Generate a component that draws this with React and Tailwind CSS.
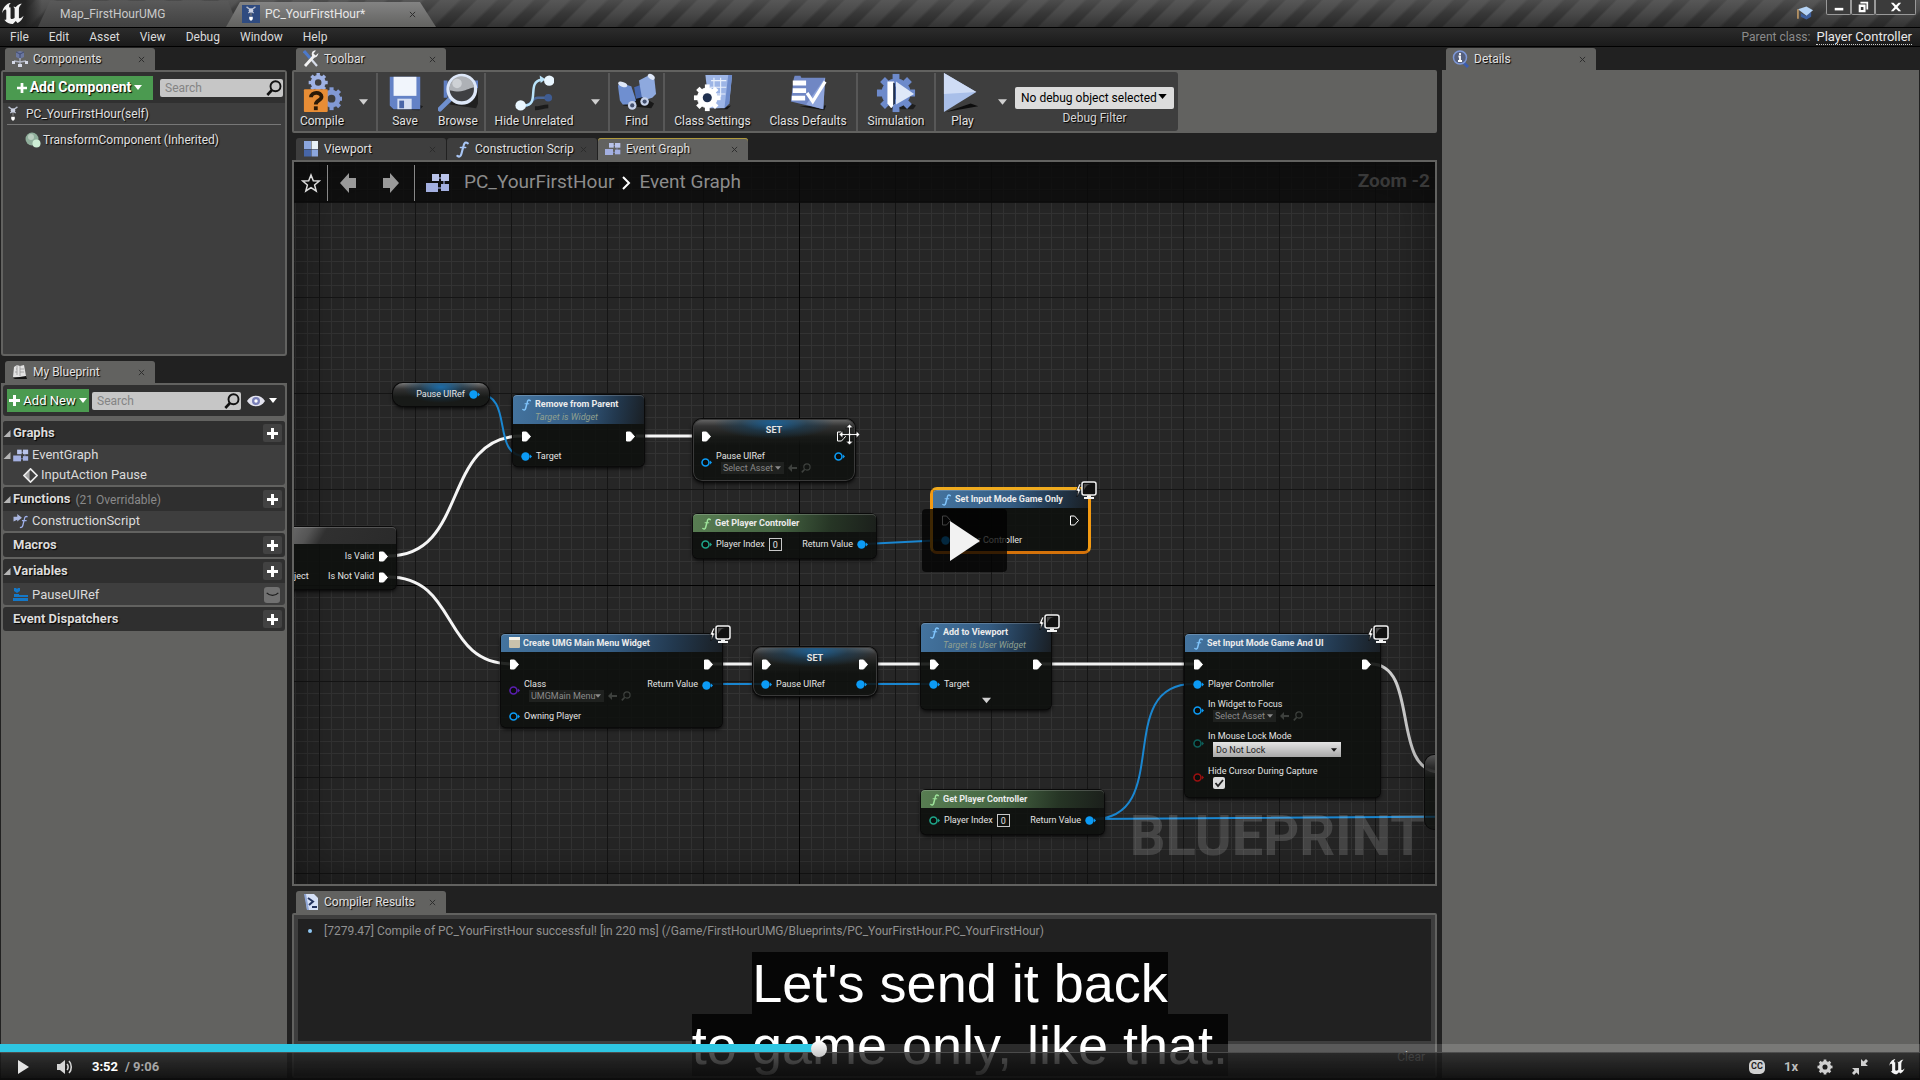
import React, { useState } from 'react';

const U_PATH =
  'M19.13 13.729c-.206.997-1.126 3.557-4.06 4.942l-1.179-1.325-1.988 2a7.338 7.338 0 01-5.804-2.978 2.859 2.859 0 00.65.123c.326.006.678-.114.678-.66v-5.394a.89.89 0 00-1.116-.89c-.92.212-1.656 2.509-1.656 2.509a7.304 7.304 0 012.528-5.597 7.408 7.408 0 013.73-1.721c-1.006.573-1.57 1.507-1.57 2.29 0 1.262.76 1.109.984.923v7.28a1.157 1.157 0 00.148.256 1.075 1.075 0 00.88.445c.76 0 1.747-.868 1.747-.868V9.172c0-.6-.452-1.324-.905-1.572 0 0 .838-.149 1.484.346a5.537 5.537 0 01.387-.425c1.508-1.48 2.929-1.902 4.112-2.112 0 0-2.151 1.69-2.151 3.96 0 1.687.043 5.801.043 5.801.799.771 1.986-.342 3.059-1.441z';

const SHADOW = '[text-shadow:1px_1px_1px_#000]';

/* ---------- icons ---------- */

function UnrealLogo({ className }) {
  return (
    <svg viewBox="4.5 5 15 15" className={className}>
      <path d={U_PATH} fill="#f4f4f4" />
    </svg>
  );
}

function FuncIcon({ color = '#a9c6f5', className = 'h-[17px] w-[13px]' }) {
  return (
    <svg viewBox="0 0 12 16" className={className} fill="none" stroke={color} strokeLinecap="round">
      <path d="M11 2.2C9 .6 7.600 1.500 7 4.500L5 12C4.400 14.600 3 15.300 1.200 14" strokeWidth="2" />
      <path d="M4 6.200h5" strokeWidth="1.400" />
    </svg>
  );
}

function GraphIcon({ className = 'h-4 w-5' }) {
  return (
    <svg viewBox="0 0 24 20" className={className}>
      <path d="M10 5h6M18 8v4M10 15h6" stroke="#7d86b5" strokeWidth="1.500" />
      <rect x="6" y="1" width="7" height="7" fill="#b9c3ea" />
      <rect x="15" y="1" width="8" height="7" fill="#b9c3ea" />
      <rect x="0" y="10" width="12" height="9" fill="#a3afe0" />
      <rect x="15" y="11" width="8" height="7" fill="#a3afe0" />
    </svg>
  );
}

function PawnIcon({ className = 'h-4 w-3' }) {
  return (
    <svg viewBox="0 0 12 18" className={className}>
      <path d="M1 1l4 3M11 1L7 4M3 8l3-3 3 3" stroke="#b9bfce" strokeWidth="1.500" fill="none" />
      <circle cx="6" cy="5" r="2.600" fill="#ccd2e2" />
      <path d="M6 8v3" stroke="#777" strokeWidth="1.500" />
      <path d="M4 12h4v3l-2 2-2-2z" fill="#fff" />
    </svg>
  );
}

function ComponentsIcon() {
  return (
    <svg viewBox="0 0 16 18" className="h-[18px] w-4">
      <path d="M4 2l4-1 4 1v5l-4 2-4-2z" fill="#6b779f" />
      <path d="M4 2l4 2 4-2M8 4v5" stroke="#3f4a72" fill="none" />
      <path d="M8 8v6M2 11l6 1 6-1" stroke="#b0b5c2" strokeWidth="1.300" fill="none" />
      <path d="M0 11h3v3H0zM13 11h3v3h-3zM6 14h4v3H6z" fill="#d5d9e6" />
    </svg>
  );
}

function WrenchIcon() {
  return (
    <svg viewBox="0 0 16 18" className="h-[18px] w-4">
      <path d="M1 1l6 7" stroke="#4d79c9" strokeWidth="3" />
      <path d="M8 9l6 7" stroke="#d8deea" strokeWidth="2.200" />
      <path d="M2 16l9-10" stroke="#f2f2f2" strokeWidth="2.800" />
      <path d="M15.500 3l-3 2.500-2-2L13 .6C10 0 8 2.500 9 5.500s5.500 3 6.500-2.500z" fill="#f2f2f2" />
    </svg>
  );
}

function ViewportIcon() {
  return (
    <svg viewBox="0 0 16 16" className="h-4 w-4">
      <rect x="1" y="0" width="7" height="8" fill="#8ba6dd" />
      <rect x="8.500" y="0" width="6.500" height="8" fill="#e8f2f8" />
      <rect x="1" y="8.500" width="7" height="7" fill="#4766a8" />
      <rect x="8.500" y="8.500" width="6.500" height="7" fill="#8ba6dd" />
    </svg>
  );
}

function BookIcon() {
  return (
    <svg viewBox="0 0 16 16" className="h-4 w-4">
      <path d="M1 13l1-10 3-2 3 1 4-1 2 11-1 1z" fill="#e2e2e2" />
      <path d="M5 1v10M8 2v10M4 5h1M8 5h4M8 8h4M3 8h2" stroke="#9a9a9a" strokeWidth=".8" />
      <path d="M1 14l13-2 1 3H3z" fill="#111" />
    </svg>
  );
}

function DetailsIcon() {
  return (
    <svg viewBox="0 0 18 18" className="h-[18px] w-[18px]">
      <path d="M11 12l5 5" stroke="#3c5cae" strokeWidth="3" />
      <circle cx="8" cy="7.500" r="6.500" fill="#56607c" stroke="#7d97d6" strokeWidth="1.500" />
      <path d="M8 3v2M6.500 6.500H8V11M6 11h4" stroke="#fff" strokeWidth="1.800" fill="none" />
    </svg>
  );
}

function LogIcon() {
  return (
    <svg viewBox="0 0 16 18" className="h-[18px] w-4">
      <path d="M2 1h9l4 4v12H4z" fill="#d6e1f6" />
      <path d="M3 1l3 16H4L1 1z" fill="#8fa6d6" />
      <path d="M5 5l5 3.500L6 12M9 14h5" stroke="#24345e" strokeWidth="2" fill="none" />
    </svg>
  );
}

function SearchIcon({ className = 'h-4 w-4', color = '#111' }) {
  return (
    <svg viewBox="0 0 16 16" className={className} fill="none" stroke={color}>
      <circle cx="9.500" cy="6.300" r="5" strokeWidth="1.900" />
      <path d="M6 10L1.300 15" strokeWidth="2.600" />
    </svg>
  );
}

function Caret({ className = 'h-[6px] w-[9px]', color = '#d0d0d0' }) {
  return (
    <svg viewBox="0 0 10 6" className={className}>
      <path d="M0 0h10L5 6z" fill={color} />
    </svg>
  );
}

function Plus({ className = 'h-[11px] w-[11px]' }) {
  return (
    <svg viewBox="0 0 11 11" className={className}>
      <path d="M4 0h3v4h4v3H7v4H4V7H0V4h4z" fill="#fff" />
    </svg>
  );
}

function Cross() {
  return (
    <svg viewBox="0 0 8 8" className="h-[7px] w-[7px]">
      <path d="M1 1l6 6M7 1L1 7" stroke="#2c2c2c" strokeWidth="1.100" />
    </svg>
  );
}

function Gear({ cx, cy, r, fill, hole }) {
  return (
    <g fill={fill} stroke={fill}>
      <circle cx={cx} cy={cy} r={r * 0.74} />
      {[0, 45, 90, 135].map((a) => (
        <path key={a} d={`M${cx} ${cy - r}V${cy + r}`} strokeWidth={r * 0.36} transform={`rotate(${a} ${cx} ${cy})`} />
      ))}
      <circle cx={cx} cy={cy} r={r * 0.34} fill={hole} stroke="none" />
    </g>
  );
}

const TOOL_ICONS = {
  compile: (
    <>
      <Gear cx={17} cy={10} r={10} fill="#9fb2e4" hole="#3e3e3e" />
      <Gear cx={31} cy={27} r={12} fill="#8299d4" hole="#3e3e3e" />
      <rect x="2" y="17" width="25" height="24" rx="1" fill="#e88d35" />
      <path d="M9.500 25.500c0-6 11-6 11-.5 0 4-6 3.500-6 8" stroke="#2b1a08" strokeWidth="4" fill="none" />
      <rect x="12.500" y="35" width="4" height="4" fill="#2b1a08" />
    </>
  ),
  save: (
    <>
      <path d="M6 38l30 1 4-4-5-2z" fill="#1c1c1c" />
      <path d="M5 4h32v34H9l-4-4z" fill="#6482c6" />
      <path d="M9 4h24v20H9z" fill="#f1f5fc" />
      <path d="M13 27h15v11H13z" fill="#d5def2" />
      <path d="M15 29h5v8h-5z" fill="#4a66a8" />
    </>
  ),
  browse: (
    <>
      <path d="M12 33l28 4 2-5V10H30z" fill="#141414" opacity=".7" />
      <path d="M6 8h4v18H6zM34 8h8v8h-8z" fill="#5f7ec2" />
      <path d="M2 38l11-11" stroke="#6f90cf" strokeWidth="5" strokeLinecap="round" />
      <circle cx="25" cy="17" r="14.500" fill="#3f4043" stroke="#dde7f8" strokeWidth="3.500" />
      <path d="M12 18a13 13 0 0126-3c-8 1-10 7-26 3z" fill="#aeb1b6" />
      <circle cx="20" cy="11" r="5" fill="#dcdee2" opacity=".7" />
    </>
  ),
  hide: (
    <>
      <path d="M10 35c9-1 8-9 15-9h8" stroke="#4a6798" strokeWidth="2.500" fill="none" />
      <path d="M22 37c6 0 8-2 14-2" stroke="#1b1b1b" strokeWidth="4" fill="none" />
      <circle cx="36" cy="26" r="4" fill="#3f5c92" />
      <path d="M9 34c20 2 3-25 20-27" stroke="#b9e3fa" strokeWidth="2.600" fill="none" />
      <path d="M27 2.500l6 4-5 4z" fill="#b9e3fa" />
      <circle cx="7" cy="34" r="5.500" fill="#e9f6ff" />
      <circle cx="37" cy="8" r="5.500" fill="#e9f6ff" />
    </>
  ),
  find: (
    <>
      <path d="M6 34l30 3 3-5-14-8z" fill="#181818" />
      <path d="M18 15l8-3 3 13-9 2z" fill="#4767ad" />
      <path d="M1 13l4-2 10 3 5 15-4 4H6L3 29z" fill="#6f8fd0" />
      <path d="M23 8L34 2l5 2 2 18-4 4-7 2-4-3z" fill="#8ea9de" />
      <ellipse cx="6" cy="12" rx="5" ry="2.500" fill="#dfe8f9" transform="rotate(20 6 12)" />
      <ellipse cx="36" cy="4" rx="4" ry="2.500" fill="#dfe8f9" transform="rotate(35 36 4)" />
      <circle cx="16" cy="34" r="4.500" fill="#c7d2ea" />
      <circle cx="16" cy="34" r="2.200" fill="#43506e" />
      <circle cx="29" cy="30" r="4.500" fill="#c7d2ea" />
      <circle cx="29" cy="30" r="2.200" fill="#43506e" />
    </>
  ),
  settings: (
    <>
      <path d="M24 38h12l4-4z" fill="#151515" />
      <path d="M13 2h28l-3 30-5 5H17z" fill="#9db5e6" />
      <path d="M19 8h16M18 15h17M22 22h12M22 5v18M29 5v20" stroke="#e9f0fc" strokeWidth="1.200" />
      <path d="M37 2h4l-3 30-5 5z" fill="#6d8bcb" />
      <Gear cx={15} cy={26} r={14} fill="#fff" hole="#20304f" />
    </>
  ),
  defaults: (
    <>
      <path d="M12 35l26 4 2-5z" fill="#151515" />
      <path d="M6 6l1-3h6l1 2h25l-2 33-34-8z" fill="#7087c4" />
      <path d="M39 5l-2 33-18-5z" fill="#8ea4dc" />
      <path d="M5 8h14v5H5zM5 16h14v5H5zM4 24h14v5H4z" fill="#fff" />
      <path d="M20 21l6 9 13-21" stroke="#fff" strokeWidth="3.400" fill="none" />
    </>
  ),
  simulation: (
    <>
      <path d="M14 38h25l3-4-12-5z" fill="#1d1d1d" />
      <Gear cx={21} cy={21} r={20} fill="#6d8acb" hole="#48629f" />
      <path d="M12 9h7v24l-3 4-4-5z" fill="#fff" />
      <path d="M21 9l19 13-19 11z" fill="#dfe8f8" />
      <path d="M18 10l2 1v21l-2 2z" fill="#22314f" />
    </>
  ),
  play: (
    <>
      <path d="M3 41l34-6-8-3z" fill="#0d0d0d" />
      <path d="M1 0l34 20L1 41z" fill="#a9bfe9" />
      <path d="M1 0l34 20L1 22z" fill="#cfdcf5" />
    </>
  ),
};

function Monitor() {
  return (
    <svg viewBox="0 0 22 19" className="absolute -top-[9px] right-[-9px] h-[19px] w-[22px]">
      <path d="M4 3L1 10h2l-1 6 4-8H4l2-5z" fill="#fff" stroke="#000" strokeWidth=".6" />
      <rect x="7" y="1" width="14" height="13" rx="2" fill="#111" stroke="#f2f2f2" strokeWidth="1.500" />
      <path d="M9 9c2-4 4-6 7-6H9z" fill="#4a4a4a" />
      <path d="M12 14.500h4V16h3v2H9v-2h3z" fill="#f2f2f2" />
    </svg>
  );
}

/* ---------- docking panels ---------- */

function DockTab({ icon, label, tone = 'bg-[#626260]' }) {
  return (
    <div className={`flex h-[22px] w-[150px] items-center gap-1 rounded-t-[3px] pl-[6px] pr-[10px] ${tone}`}>
      <span className="flex w-[18px] shrink-0 justify-center">{icon}</span>
      <span className={`flex-1 whitespace-nowrap text-[12px] leading-4 text-[#e2e2e2] ${SHADOW}`}>{label}</span>
      <button type="button" aria-label={`Close ${label}`}>
        <Cross />
      </button>
    </div>
  );
}

function SearchBox({ label, className }) {
  return (
    <label className={`flex h-[18px] items-center rounded-[2px] bg-[#c6c6c6] pr-px ${className}`}>
      <input
        aria-label={label}
        placeholder="Search"
        className="w-full min-w-0 flex-1 bg-transparent pl-[5px] text-[12px] leading-4 text-black outline-none placeholder:text-[#848484]"
      />
      <SearchIcon />
    </label>
  );
}

function ComponentsPanel() {
  return (
    <section>
      <div className="pl-1">
        <DockTab icon={<ComponentsIcon />} label="Components" />
      </div>
      <div className="flex h-[286px] flex-col rounded-[3px] border-2 border-[#626260] bg-[#3e3e3e]">
        <div className="flex h-[31px] items-center gap-[7px] bg-[#303030] pl-[3px] pr-[2px]">
          <button
            type="button"
            className={`flex h-6 w-[147px] shrink-0 items-center justify-center gap-[3px] bg-[#4b9a50] text-[14px] font-bold text-white ${SHADOW}`}
          >
            <Plus className="h-[10px] w-[10px]" />
            Add Component
            <Caret color="#fff" className="h-[5px] w-[8px]" />
          </button>
          <SearchBox label="Search components" className="flex-1" />
        </div>
        <div className="mx-1 flex h-[22px] items-center gap-[7px] border-b border-[#777] text-[12px] text-[#e0e0e0]">
          <PawnIcon />
          <span className={SHADOW}>PC_YourFirstHour(self)</span>
        </div>
        <div className="flex h-[29px] items-center gap-[2px] pl-[22px] text-[12px] text-[#e0e0e0]">
          <svg viewBox="0 0 16 16" className="h-4 w-4">
            <circle cx="7" cy="7" r="6.500" fill="#8fae9b" />
            <circle cx="6" cy="5" r="3" fill="#b9cdbf" />
            <circle cx="11.500" cy="11.500" r="4" fill="#cdeed5" />
          </svg>
          <span className={SHADOW}>TransformComponent (Inherited)</span>
        </div>
      </div>
    </section>
  );
}

function Expander() {
  return (
    <svg viewBox="0 0 8 8" className="h-[7px] w-2">
      <path d="M8 0v8H0z" fill="#b5b5b5" />
    </svg>
  );
}

function CategoryHeader({ label, note, open }) {
  return (
    <div className="flex h-6 items-center bg-[#2f2f2f] pr-[3px]">
      <span className="w-[10px]">{open && <Expander />}</span>
      <h3 className={`text-[13px] font-bold text-[#dcdcdc] ${SHADOW}`}>{label}</h3>
      {note && <span className="ml-[5px] pt-px text-[12px] text-[#8a8a8a]">{note}</span>}
      <button type="button" aria-label={`Add to ${label}`} className="ml-auto flex h-[18px] w-[19px] items-center justify-center rounded-[2px] bg-[#424242]">
        <Plus />
      </button>
    </div>
  );
}

function BlueprintPanel() {
  const row = 'flex items-center text-[13px] text-[#dadada]';
  return (
    <section className="flex min-h-0 flex-1 flex-col">
      <div className="pl-1">
        <DockTab icon={<BookIcon />} label="My Blueprint" />
      </div>
      <div className="flex-1 bg-[#626260] p-[2px]">
        <div className="mb-[5px] flex h-[31px] items-center gap-[3px] rounded-[3px] bg-[#303030] pl-1 pr-2">
          <button type="button" className={`flex h-[23px] w-[82px] shrink-0 items-center justify-center gap-[3px] bg-[#4b9a50] text-[13px] text-white ${SHADOW}`}>
            <Plus />
            Add New
            <Caret color="#fff" className="h-[5px] w-[8px]" />
          </button>
          <SearchBox label="Search blueprint" className="flex-1" />
          <button type="button" aria-label="View options" className="ml-[3px] flex items-center gap-1">
            <svg viewBox="0 0 18 12" className="h-3 w-[18px]">
              <path d="M0 6c4-7 14-7 18 0-4 7-14 7-18 0z" fill="#e3e3ee" />
              <circle cx="9" cy="6" r="4" fill="#7a80b8" />
              <circle cx="9" cy="6" r="1.700" fill="#fff" />
            </svg>
            <Caret color="#fff" className="h-[5px] w-[8px]" />
          </button>
        </div>

        <div className="flex flex-col gap-[2px] [&>div]:overflow-hidden [&>div]:rounded-[3px] [&>div]:bg-[#3e3e3e]">
          <div>
            <CategoryHeader label="Graphs" open />
            <div className={`${row} h-5`}>
              <span className="w-[10px]"><Expander /></span>
              <GraphIcon className="h-[13px] w-4" />
              <span className="ml-[3px]">EventGraph</span>
            </div>
            <div className={`${row} h-5 pl-5`}>
              <svg viewBox="0 0 16 16" className="h-[15px] w-[15px]">
                <path d="M8 1l7 7-7 7-7-7z" fill="none" stroke="#e9e9e9" strokeWidth="1.800" />
                <path d="M7 1.500L1 8l6 6.500z" fill="#e9e9e9" opacity=".6" />
              </svg>
              <span className="ml-[3px]">InputAction Pause</span>
            </div>
          </div>
          <div>
            <CategoryHeader label="Functions" note="(21 Overridable)" open />
            <div className={`${row} h-5 pl-[10px]`}>
              <svg viewBox="0 0 16 16" className="h-[15px] w-4">
                <path d="M0 8V3h4V0l5 4-5 4V6z" fill="#aab6df" />
                <path d="M15 3c-2-1-3 0-3.500 3L10 12c-.5 2-2 3-3 2M9 7h5" stroke="#9fb0ea" strokeWidth="1.400" fill="none" />
              </svg>
              <span className="ml-[3px]">ConstructionScript</span>
            </div>
          </div>
          <div>
            <CategoryHeader label="Macros" />
          </div>
          <div>
            <CategoryHeader label="Variables" open />
            <div className={`${row} h-[22px] pl-[10px] pr-[5px] pt-px`}>
              <svg viewBox="0 0 16 14" className="h-[14px] w-4">
                <path d="M1 0h2l1 1 1-1h2v3L4 5 1 3zM1 6h5v1h9v2H1zM0 10h15v3H0z" fill="#1478c8" />
              </svg>
              <span className="ml-[3px]">PauseUIRef</span>
              <button type="button" aria-label="Toggle visibility" className="ml-auto flex h-4 w-4 items-center justify-center rounded-[3px] bg-[#717171]">
                <svg viewBox="0 0 14 6" className="h-[5px] w-[13px]">
                  <path d="M0 1c4 4 10 4 14 0" stroke="#1c1c1c" strokeWidth="1.500" fill="none" />
                </svg>
              </button>
            </div>
          </div>
          <div>
            <CategoryHeader label="Event Dispatchers" />
          </div>
        </div>
      </div>
    </section>
  );
}

/* ---------- toolbar ---------- */

function ToolButton({ icon, label, width }) {
  return (
    <button type="button" className={`flex shrink-0 flex-col items-center whitespace-nowrap ${width}`}>
      <svg viewBox="0 0 42 42" className="h-10 w-10">{TOOL_ICONS[icon]}</svg>
      <span className={`text-[12px] leading-4 text-[#e2e2e2] ${SHADOW}`}>{label}</span>
    </button>
  );
}

function ToolMenu({ label }) {
  return (
    <button type="button" aria-label={label} className="flex w-[26px] items-center justify-center">
      <Caret />
    </button>
  );
}

function Toolbar() {
  const group = 'flex border-r-2 border-[#585858]';
  return (
    <section>
      <div className="pl-1">
        <DockTab icon={<WrenchIcon />} label="Toolbar" />
      </div>
      <div className="flex h-[63px] rounded-[2px] border-2 border-[#626260] bg-[#626260]">
        <div className="flex rounded-r-[3px] bg-[#3e3e3e] pt-px">
          <div className={group}>
            <ToolButton icon="compile" label="Compile" width="w-14" />
            <ToolMenu label="Compile options" />
          </div>
          <div className={group}>
            <ToolButton icon="save" label="Save" width="w-[54px]" />
            <ToolButton icon="browse" label="Browse" width="w-[52px]" />
          </div>
          <div className={group}>
            <ToolButton icon="hide" label="Hide Unrelated" width="w-[96px]" />
            <ToolMenu label="Hide unrelated options" />
          </div>
          <div className={group}>
            <ToolButton icon="find" label="Find" width="w-[53px]" />
          </div>
          <div className={group}>
            <ToolButton icon="settings" label="Class Settings" width="w-[95px]" />
            <ToolButton icon="defaults" label="Class Defaults" width="w-[96px]" />
          </div>
          <div className={group}>
            <ToolButton icon="simulation" label="Simulation" width="w-[76px]" />
          </div>
          <div className="flex pr-1">
            <ToolButton icon="play" label="Play" width="w-[53px]" />
            <ToolMenu label="Play options" />
            <div className="flex flex-col items-center pt-3">
              <div className="relative">
                <select
                  aria-label="Debug Filter"
                  className="h-[22px] w-[159px] appearance-none rounded-[2px] bg-[#dcdcdc] pl-[6px] text-[12px] text-black"
                >
                  <option>No debug object selected</option>
                </select>
                <Caret color="#000" className="pointer-events-none absolute right-[7px] top-[9px] h-[5px] w-[9px]" />
              </div>
              <span className={`text-[12px] leading-[18px] text-[#d6d6d6] ${SHADOW}`}>Debug Filter</span>
            </div>
          </div>
        </div>
      </div>
    </section>
  );
}

/* ---------- graph ---------- */

const BLUE = '#0c9bf5';

function ExecPin({ open }) {
  return (
    <svg viewBox="0 0 11 11" className="h-[11px] w-[11px] shrink-0">
      <path d="M1.500 1h4L9.500 5.500 5.500 10h-4z" fill={open ? 'none' : '#fff'} stroke="#fff" strokeLinejoin="round" />
    </svg>
  );
}

function DataPin({ color = BLUE, open }) {
  return (
    <svg viewBox="0 0 11 11" className="h-[11px] w-[11px] shrink-0">
      <circle cx="4.500" cy="5.500" r={open ? 3.5 : 4.2} fill={open ? '#0b0d0b' : color} stroke={color} strokeWidth={open ? 1.6 : 0} />
      <path d="M9 3.500L11 5.500 9 7.500z" fill={color} />
    </svg>
  );
}

function ExecRow({ left, right }) {
  return (
    <div className="flex h-5 items-center justify-between px-2">
      <ExecPin open={left === 'open'} />
      <ExecPin open={right === 'open'} />
    </div>
  );
}

function PinRow({ pin, label, children }) {
  return (
    <div className="flex h-5 items-center gap-1 px-2 pt-px">
      {pin}
      <span>{label}</span>
      {children}
    </div>
  );
}

function FieldRow({ pin, label, right, children }) {
  return (
    <div className="flex items-center gap-1 px-2">
      {pin}
      <div className="flex flex-col pb-1 pt-1 leading-3">
        <span>{label}</span>
        {children}
      </div>
      {right}
    </div>
  );
}

function AssetPicker({ value, label, width }) {
  return (
    <div className="ml-[5px] flex h-3 items-center gap-1">
      <div className="relative flex">
        <select aria-label={label} className={`h-3 appearance-none bg-[#1f211f] pl-[2px] text-[9px] leading-3 text-[#8a8a8a] ${width}`}>
          <option>{value}</option>
        </select>
        <Caret color="#8a8a8a" className="pointer-events-none absolute right-[3px] top-1 h-1 w-[6px]" />
      </div>
      <svg viewBox="0 0 9 8" className="h-2 w-[9px]"><path d="M0 4l4-4v3h5v2H4v3z" fill="#3d403d" /></svg>
      <SearchIcon color="#3d403d" className="h-[10px] w-[10px]" />
    </div>
  );
}

function Node({ className, tone = 'blue', title, subtitle, icon, selected, badge, children }) {
  const tones = {
    blue: 'bg-[linear-gradient(100deg,#44749f_0%,#355d84_50%,#22384e_78%,#1a1f24_100%)]',
    green: 'bg-[linear-gradient(100deg,#587d52_0%,#466643_45%,#263525_75%,#1b1f1b_100%)]',
  };
  const frame = selected
    ? 'border-[3px] border-[#f39a12] border-t-[#f0ab1e] border-b-[#d4720a] rounded-[7px]'
    : 'rounded-[5px] shadow-[0_0_0_1px_#0a0a0a,0_2px_4px_#000]';
  return (
    <article className={`absolute bg-[#0e110e]/90 text-[9px] text-[#e4e4e4] ${frame} ${className}`}>
      <header className={`rounded-t-[4px] px-2 pt-[3px] shadow-[inset_0_1px_0_#ffffff30] ${subtitle ? 'h-[29px]' : 'h-[18px]'} ${tones[tone]}`}>
        <div className="flex gap-[3px]">
          {icon || <FuncIcon className="mt-px h-[12px] w-[11px]" color={tone === 'green' ? '#9ee39a' : '#7fc4fb'} />}
          <h4 className="whitespace-nowrap text-[9px] font-bold leading-3 text-[#ececec]">{title}</h4>
        </div>
        {subtitle && <p className="whitespace-nowrap pl-[14px] text-[9px] italic leading-[13px] text-[#90a090]">{subtitle}</p>}
      </header>
      <div className="pt-[2px]">{children}</div>
      {badge && <Monitor />}
    </article>
  );
}

function SetNode({ className, children }) {
  return (
    <article
      className={`absolute rounded-[9px] bg-[#0e110e]/85 bg-[radial-gradient(ellipse_60px_16px_at_50%_4px,#1c5f93_0%,#14405f80_55%,transparent_100%),linear-gradient(180deg,#6a6a6a_0px,#333_7px,#181a18_18px,transparent_26px)] pt-[7px] text-[9px] text-[#e4e4e4] shadow-[0_0_0_1px_#0a0a0a,inset_0_0_0_1px_#3a3a3a,0_2px_4px_#000] ${className}`}
    >
      <h4 className="absolute inset-x-0 top-[5px] text-center text-[9px] font-bold leading-3">SET</h4>
      {children}
    </article>
  );
}

function GetController({ className }) {
  return (
    <Node className={`h-11 w-[183px] ${className}`} tone="green" title="Get Player Controller">
      <PinRow pin={<DataPin open color="#1fa58a" />} label="Player Index">
        <input aria-label="Player Index" defaultValue="0" className="h-[13px] w-[13px] border border-[#c8c8c8] bg-transparent text-center text-[9px] leading-3 outline-none" />
        <span className="ml-auto">Return Value</span>
        <DataPin />
      </PinRow>
    </Node>
  );
}

function Wires() {
  return (
    <svg className="absolute inset-0 h-full w-full" fill="none">
      <defs>
        <pattern id="minor" width="12" height="12" patternUnits="userSpaceOnUse" x="1" y="3">
          <path d="M.5 0v12M0 .5h12" stroke="#333" />
        </pattern>
        <pattern id="major" width="96" height="96" patternUnits="userSpaceOnUse" x="25" y="39">
          <path d="M.5 0v96M0 .5h96" stroke="#151515" />
        </pattern>
      </defs>
      <rect width="100%" height="100%" fill="url(#minor)" />
      <rect width="100%" height="100%" fill="url(#major)" />
      <path d="M505.500 0v2000M0 423.500h3000" stroke="#000" />
      <g stroke="#f5f5f5" strokeWidth="3">
        <path d="M94 394C176 394 146 274 228 274" />
        <path d="M94 415C166 415 146 502 218 502" />
        <path d="M342 274H412M418 502H472M573 502H638M747 502H902" />
        <path d="M1077 502C1126 502 1096 610 1146 610" stroke="#d5d5d5" />
      </g>
      <g stroke="#1a86d0" strokeWidth="2">
        <path d="M184 232C221 232 196 294 231 294" />
        <path d="M571 382L651 378M416 522H472M570 522H638" />
        <path d="M799 657C881 657 818 522 899 522M799 657L1400 653" />
      </g>
    </svg>
  );
}

function MoveCursor() {
  return (
    <svg viewBox="0 0 22 22" className="absolute left-[545px] top-[262px] h-[21px] w-[21px]">
      <path d="M11 0l4 4h-3v6h6V7l4 4-4 4v-3h-6v6h3l-4 4-4-4h3v-6H4v3l-4-4 4-4v3h6V4H7z" fill="#fff" stroke="#000" strokeWidth=".8" />
    </svg>
  );
}

function GraphCanvas() {
  return (
    <div className="relative min-h-0 flex-1 overflow-hidden border-2 border-[#626260] bg-[#262626]">
      <Wires />
      <div className="absolute inset-0 shadow-[inset_0_0_60px_#00000080]" />
      <p className="absolute bottom-[16px] right-[10px] text-[56px] font-bold leading-[64px] text-[#ffffff26]">BLUEPRINT</p>

      <article className="absolute -left-[50px] top-[365px] h-[62px] w-[152px] rounded-[5px] bg-[#0e110e]/90 text-[9px] text-[#e4e4e4] shadow-[0_0_0_1px_#0a0a0a,0_2px_4px_#000]">
        <header className="h-[17px] rounded-t-[4px] bg-[linear-gradient(120deg,#777_20%,#555_42%,#303030_52%,#2a2a2a)] shadow-[inset_0_1px_0_#ffffff30]" />
        <div className="flex h-[23px] items-center justify-end gap-1 pr-[7px] pt-[2px]">
          Is Valid <ExecPin />
        </div>
        <div className="flex h-5 items-center gap-1 pl-[50px] pr-[7px]">
          <span>ject</span>
          <span className="ml-auto">Is Not Valid</span> <ExecPin />
        </div>
      </article>

      <article className="absolute left-[99px] top-[221px] flex h-[23px] w-[96px] items-center justify-end gap-1 rounded-[10px] bg-[#0e110e]/85 bg-[radial-gradient(ellipse_38px_16px_at_50%_4px,#1c6aa5_0%,#14405f80_55%,transparent_100%),linear-gradient(180deg,#777_0px,#333_6px,#181a18_14px)] pr-[9px] text-[9px] text-[#e4e4e4] shadow-[0_0_0_1px_#0a0a0a,0_2px_4px_#000]">
        Pause UIRef <DataPin />
      </article>

      <Node className="left-[219px] top-[233px] h-[71px] w-[131px]" title="Remove from Parent" subtitle="Target is Widget">
        <ExecRow />
        <PinRow pin={<DataPin />} label="Target" />
      </Node>

      <SetNode className="left-[399px] top-[257px] h-[62px] w-[162px]">
        <ExecRow right="open" />
        <FieldRow
          pin={<DataPin open />}
          label="Pause UIRef"
          right={<span className="mb-3 ml-auto mr-[2px] flex"><DataPin open /></span>}
        >
          <AssetPicker label="Pause UIRef asset" value="Select Asset" width="w-[63px]" />
        </FieldRow>
      </SetNode>

      <GetController className="left-[399px] top-[352px]" />

      <Node className="left-[636px] top-[325px] h-[67px] w-[161px]" title="Set Input Mode Game Only" selected badge>
        <ExecRow left="open" right="open" />
        <PinRow pin={<DataPin />} label="Player Controller" />
      </Node>

      <Node
        className="left-[207px] top-[472px] h-[93px] w-[221px]"
        title="Create UMG Main Menu Widget"
        badge
        icon={
          <svg viewBox="0 0 11 11" className="h-[11px] w-[11px]">
            <rect width="11" height="11" rx="1" fill="#c9c2ac" />
            <rect width="11" height="3" fill="#f7f4ea" />
          </svg>
        }
      >
        <ExecRow />
        <FieldRow
          pin={<DataPin open color="#5a1fb0" />}
          label="Class"
          right={<span className="mb-[10px] ml-auto mr-px flex items-center gap-1">Return Value <DataPin /></span>}
        >
          <AssetPicker label="Class asset" value="UMGMain Menu" width="w-[75px]" />
        </FieldRow>
        <PinRow pin={<DataPin open />} label="Owning Player" />
      </Node>

      <SetNode className="left-[459px] top-[485px] h-[49px] w-[124px]">
        <ExecRow />
        <PinRow pin={<DataPin />} label="Pause UIRef">
          <span className="ml-auto mr-[2px] flex"><DataPin /></span>
        </PinRow>
      </SetNode>

      <Node className="left-[627px] top-[461px] h-[86px] w-[130px]" title="Add to Viewport" subtitle="Target is User Widget" badge>
        <ExecRow />
        <PinRow pin={<DataPin />} label="Target" />
        <button type="button" aria-label="Show advanced pins" className="mx-auto mt-[3px] block">
          <Caret className="h-[7px] w-[9px]" />
        </button>
      </Node>

      <Node className="left-[891px] top-[472px] h-[163px] w-[195px]" title="Set Input Mode Game And UI" badge>
        <ExecRow />
        <PinRow pin={<DataPin />} label="Player Controller" />
        <FieldRow pin={<DataPin open />} label="In Widget to Focus">
          <AssetPicker label="In Widget to Focus asset" value="Select Asset" width="w-[63px]" />
        </FieldRow>
        <FieldRow pin={<DataPin open color="#0d5f5a" />} label="In Mouse Lock Mode">
          <div className="relative ml-[5px] flex">
            <select aria-label="In Mouse Lock Mode" className="h-[15px] w-[128px] appearance-none bg-[linear-gradient(#e4e4e4,#a8a8a8)] pl-[3px] text-[9px] leading-3 text-[#222]">
              <option>Do Not Lock</option>
            </select>
            <Caret color="#111" className="pointer-events-none absolute right-1 top-[6px] h-1 w-[6px]" />
          </div>
        </FieldRow>
        <FieldRow pin={<DataPin open color="#9c1010" />} label="Hide Cursor During Capture">
          <span className="relative ml-[5px] flex h-3 w-3">
            <input type="checkbox" defaultChecked aria-label="Hide Cursor During Capture" className="h-3 w-3 appearance-none rounded-[2px] bg-[#dcdcdc]" />
            <svg viewBox="0 0 12 12" className="pointer-events-none absolute inset-0 h-3 w-3">
              <path d="M2.500 6l2.500 3 5-6" stroke="#222" strokeWidth="1.800" fill="none" />
            </svg>
          </span>
        </FieldRow>
      </Node>

      <GetController className="left-[627px] top-[628px]" />

      <article className="absolute left-[1131px] top-[593px] h-[74px] w-20 rounded-[9px] bg-[#0e110e]/60 bg-[linear-gradient(180deg,#555_0px,#2a2a2a_12px,transparent_24px)] shadow-[0_0_0_1px_#0a0a0a]" />

      <MoveCursor />

      <nav className="absolute inset-x-0 top-0 flex h-[41px] items-center bg-[#0a0a0a]/80 text-[19px] leading-5 text-[#8c8c8c]">
        <button type="button" aria-label="Favourite" className="flex h-9 w-[34px] items-center justify-center border-r border-[#888]">
          <svg viewBox="0 0 20 20" className="h-5 w-5">
            <path d="M10 2l2.300 5.700 6 .3-4.700 3.900L15.200 18 10 14.600 4.800 18l1.600-6.100L1.700 8l6-.3z" fill="none" stroke="#ddd" strokeWidth="1.500" />
          </svg>
        </button>
        <div className="flex h-9 w-[87px] items-center justify-between border-r border-[#888] pl-3 pr-[15px]">
          <button type="button" aria-label="Back">
            <svg viewBox="0 0 17 22" className="h-[22px] w-[17px]"><path d="M0 11L9 1v5h7v10H9v5z" fill="#9a9a9a" /></svg>
          </button>
          <button type="button" aria-label="Forward">
            <svg viewBox="0 0 17 22" className="h-[22px] w-[17px]"><path d="M17 11L8 1v5H1v10h7v5z" fill="#9a9a9a" /></svg>
          </button>
        </div>
        <GraphIcon className="ml-[11px] h-5 w-6" />
        <a href="#pc" className="ml-[14px] pb-[2px]">PC_YourFirstHour</a>
        <svg viewBox="0 0 9 14" className="mx-2 h-[14px] w-[9px]">
          <path d="M1 1l6 6-6 6" stroke="#fff" strokeWidth="2" fill="none" />
        </svg>
        <a href="#graph" className="pb-[2px]">Event Graph</a>
        <span className="ml-auto pb-1 pr-[5px] font-bold text-[#393939]">Zoom -2</span>
      </nav>
    </div>
  );
}

function CompilerResults() {
  return (
    <section className="pt-[5px]">
      <div className="pl-1">
        <DockTab icon={<LogIcon />} label="Compiler Results" />
      </div>
      <div className="flex h-[165px] flex-col rounded-[2px] border-2 border-[#626260] bg-[#3e3e3e] px-1 pt-1">
        <ul className="h-[122px] bg-[#212121] pl-[10px] pt-[3px] text-[12px] leading-[18px] text-[#919191]">
          <li className="flex items-center gap-3">
            <span className="h-1 w-1 rounded-full bg-[#8fc7f2]" />
            [7279.47] Compile of PC_YourFirstHour successful! [in 220 ms] (/Game/FirstHourUMG/Blueprints/PC_YourFirstHour.PC_YourFirstHour)
          </li>
        </ul>
        <button type="button" className="mr-[6px] mt-2 self-end text-[12px] leading-4 text-[#c0c0c0]">Clear</button>
      </div>
    </section>
  );
}

/* ---------- window chrome ---------- */

function TitleBar() {
  return (
    <header className="relative flex h-7 shrink-0 border-b border-black bg-[linear-gradient(180deg,#5c5c5c99_0%,#3c3c3c66_50%,#20202099_100%),repeating-linear-gradient(135deg,#505050_0px,#505050_12px,#343434_15px,#343434_24px,#505050_26px)]">
      <div className="flex w-[42px] items-center bg-[linear-gradient(90deg,#222,#222_60%,#22222200)] pl-[2px]">
        <UnrealLogo className="h-[22px] w-[22px]" />
      </div>
      <button
        type="button"
        className="-ml-1 h-[27px] w-[200px] bg-[linear-gradient(#5a5a5a,#414141)] pl-[22px] text-left text-[12px] text-[#c9c9c9] [clip-path:polygon(12px_1px,190px_1px,200px_27px,0_27px)]"
      >
        Map_FirstHourUMG
      </button>
      <div className="-ml-3 flex h-[27px] w-[210px] items-center bg-[linear-gradient(#868686,#626260)] pl-[16px] pr-[20px] pt-px [clip-path:polygon(14px_2px,194px_2px,210px_27px,0_27px)]">
        <span className="flex h-[18px] w-[18px] items-center justify-center bg-[#2f4b80]">
          <PawnIcon />
        </span>
        <span className="ml-[5px] flex-1 text-[12px] text-[#e8e8e8]">PC_YourFirstHour*</span>
        <button type="button" aria-label="Close PC_YourFirstHour" className="flex">
          <Cross />
        </button>
      </div>
      <div className="ml-auto flex">
        <svg viewBox="0 0 18 16" className="mr-3 mt-[5px] h-4 w-[17px]">
          <path d="M4 8v4l6 3 5-3V7l-6 4z" fill="#3d5f9e" />
          <path d="M1 4l9-3 7 4-7 6z" fill="#b5d3f5" />
          <path d="M1 4v10" stroke="#d1a56a" strokeWidth="1.500" />
        </svg>
        {[
          ['Minimize', 'w-[25px]', 'M2 8h10v3H2z'],
          ['Restore', 'w-6', 'M4 1h9v9h-2V3H4zM2 4h8v9H2zM4.500 7v3.500h3V7z'],
          ['Close window', 'w-[41px]', 'M1 2h3l3 3 3-3h3L8.700 7l4.300 5h-3L7 9l-3 3H1l4.300-5z'],
        ].map(([name, width, d]) => (
          <button
            key={name}
            type="button"
            aria-label={name}
            className={`flex h-[15px] items-center justify-center rounded-b-[2px] border border-t-0 border-[#999] bg-[#3b3b3b] ${width}`}
          >
            <svg viewBox="0 0 14 14" className="h-3 w-3"><path d={d} fill="#fff" fillRule="evenodd" /></svg>
          </button>
        ))}
        <div className="w-1" />
      </div>
    </header>
  );
}

function MenuBar() {
  return (
    <nav className="flex h-[19px] shrink-0 items-center border-b border-black bg-[linear-gradient(#2c2c2c,#1a1a1a)] pl-[10px] pr-2 text-[12px] text-[#dadada]">
      <div className="flex gap-5">
        {['File', 'Edit', 'Asset', 'View', 'Debug', 'Window', 'Help'].map((item) => (
          <button type="button" key={item}>{item}</button>
        ))}
      </div>
      <span className="ml-auto text-[#8b8b8b]">Parent class:</span>
      <a href="#player-controller" className="ml-[6px] border-b border-dotted border-[#ccc] text-[13px] leading-[15px] text-[#e8e8e8]">Player Controller</a>
    </nav>
  );
}

/* ---------- video player ---------- */

function Player() {
  const [progress, setProgress] = useState(42.66);
  const pct = `${progress}%`;
  return (
    <div className="absolute inset-x-0 bottom-0 h-9">
      <div className="relative h-2 bg-white/15">
        <div className="h-2 bg-[#2ec6e2]" style={{ width: pct }} />
        <span className="absolute -top-[3px] h-4 w-4 -translate-x-1/2 rounded-full bg-[linear-gradient(#fff,#c4c4c4)]" style={{ left: pct }} />
        <input
          type="range"
          min="0"
          max="100"
          step="any"
          aria-label="Seek"
          value={progress}
          onChange={(e) => setProgress(Number(e.target.value))}
          className="absolute inset-0 h-2 w-full opacity-0"
        />
      </div>
      <div className="flex h-7 items-center border-t border-[#777]/60 bg-[linear-gradient(#232323c8,#0b0b0bee)] pl-[17px] pr-[15px] text-[13px] text-[#bdbdbd]">
        <button type="button" aria-label="Play">
          <svg viewBox="0 0 12 14" className="h-[14px] w-3"><path d="M1 0l11 7-11 7z" fill="#e4e4e4" /></svg>
        </button>
        <button type="button" aria-label="Mute" className="ml-7">
          <svg viewBox="0 0 16 14" className="h-[14px] w-4">
            <path d="M0 4h3l5-4v14l-5-4H0z" fill="#d5d5d5" />
            <path d="M10 4c1.500 1.500 1.500 4.500 0 6M12 1c3 3 3 9 0 12" stroke="#d5d5d5" strokeWidth="1.600" fill="none" />
          </svg>
        </button>
        <span className="ml-[19px] font-bold text-white">3:52</span>
        <span className="ml-[7px] font-bold text-[#a5a5a5]">/ 9:06</span>
        <button type="button" aria-label="Captions" className="ml-auto flex h-[14px] w-4 items-center justify-center rounded-[5px] bg-[#d0d0d0] text-[9px] font-bold leading-none text-[#222]">
          CC
        </button>
        <button type="button" className="ml-[19px] font-bold">1x</button>
        <button type="button" aria-label="Settings" className="ml-[19px]">
          <svg viewBox="0 0 16 16" className="h-4 w-4"><Gear cx={8} cy={8} r={7.5} fill="#d0d0d0" hole="#1d1d1d" /></svg>
        </button>
        <button type="button" aria-label="Exit full screen" className="ml-[19px]">
          <svg viewBox="0 0 16 16" className="h-4 w-4">
            <path d="M9 0v7h7l-2.500-2.300L16 2l-2-2-2.500 2.600zM7 16V9H0l2.500 2.300L0 14l2 2 2.500-2.600z" fill="#d0d0d0" />
          </svg>
        </button>
        <UnrealLogo className="ml-[21px] h-4 w-4" />
      </div>
    </div>
  );
}

export default function App() {
  return (
    <div className="relative flex h-screen flex-col overflow-hidden bg-[#212121] font-['Roboto',sans-serif]">
      <TitleBar />
      <MenuBar />
      <main className="flex min-h-0 flex-1 px-px pb-[2px] pt-px">
        <aside className="flex w-[286px] shrink-0 flex-col gap-[5px]">
          <ComponentsPanel />
          <BlueprintPanel />
        </aside>
        <div className="ml-[5px] flex min-w-0 flex-1 flex-col">
          <Toolbar />
          <div className="flex gap-px pl-1 pt-[5px]">
            <DockTab icon={<ViewportIcon />} label="Viewport" tone="bg-[#3e3e3e]" />
            <DockTab icon={<FuncIcon />} label="Construction Scrip" tone="bg-[#3e3e3e]" />
            <DockTab icon={<GraphIcon className="h-[14px] w-4" />} label="Event Graph" tone="bg-[#626260] shadow-[inset_0_1px_0_#b09a3c]" />
          </div>
          <GraphCanvas />
          <CompilerResults />
        </div>
        <aside className="ml-[5px] flex w-[477px] shrink-0 flex-col">
          <div className="pl-1">
            <DockTab icon={<DetailsIcon />} label="Details" />
          </div>
          <div className="flex-1 bg-[#626260]" />
        </aside>
      </main>

      <button type="button" aria-label="Play video" className="absolute left-[48%] top-[509px] flex h-[63px] w-[85px] items-center justify-center rounded-[4px] bg-black/75">
        <svg viewBox="0 0 31 40" className="h-10 w-[31px]"><path d="M1 0l30 20L1 40z" fill="#f2f2f2" /></svg>
      </button>

      <div className="absolute inset-x-0 bottom-1 flex flex-col items-center whitespace-nowrap font-['Liberation_Sans',Arial,sans-serif] text-[54px] leading-[62px] text-white">
        <span className="bg-[#060606]">Let&apos;s send it back</span>
        <span className="bg-[#060606]">to game only, like that.</span>
      </div>

      <Player />
    </div>
  );
}
